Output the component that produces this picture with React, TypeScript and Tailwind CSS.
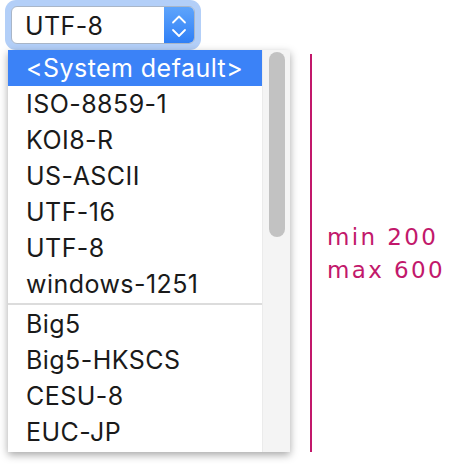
const encodings = [
  "<System default>",
  "ISO-8859-1",
  "KOI8-R",
  "US-ASCII",
  "UTF-16",
  "UTF-8",
  "windows-1251",
];

const moreEncodings = ["Big5", "Big5-HKSCS", "CESU-8", "EUC-JP"];

function Chevrons() {
  return (
    <svg width="30" height="38" viewBox="0 0 30 38" fill="none">
      <path
        d="M9 15.5 L15 9.5 L21 15.5"
        stroke="white"
        strokeWidth="1.8"
        strokeLinecap="round"
        strokeLinejoin="round"
      />
      <path
        d="M9 23 L15 29 L21 23"
        stroke="white"
        strokeWidth="1.8"
        strokeLinecap="round"
        strokeLinejoin="round"
      />
    </svg>
  );
}

export default function App() {
  return (
    <div className="w-[450px] h-[464px] bg-white flex items-start overflow-hidden font-['Inter','Liberation_Sans',sans-serif] text-[#1a1a1a]">
      <div className="w-[290px] flex flex-col">
        {/* select with focus ring */}
        <div className="ml-[5px] w-[196px] h-[50px] p-[6px] rounded-[11px] bg-[#b3cff8]">
          <div className="flex h-[38px] bg-white border border-[#a9b6c8] rounded-[6px] overflow-hidden">
            <div className="flex-1 pl-[13px] pt-[2px] flex items-center text-[25px] tracking-[0.4px] leading-none">
              UTF-8
            </div>
            <div className="w-[30px] bg-gradient-to-b from-[#5ea4fb] to-[#2f7ff6]">
              <Chevrons />
            </div>
          </div>
        </div>

        {/* popup list */}
        <div className="ml-[8px] w-[282px] h-[402px] flex bg-white shadow-[0_3px_8px_rgba(0,0,0,0.35)] overflow-hidden">
          <div className="w-[254px] flex flex-col text-[25px] tracking-[0.45px]">
            {encodings.map((name, i) => (
              <div
                key={name}
                className={
                  i === 0
                    ? "h-[36px] pl-[18px] pt-[2px] flex items-center whitespace-nowrap bg-[#3b82f7] text-white"
                    : "h-[36px] pl-[18px] pt-[2px] flex items-center whitespace-nowrap"
                }
              >
                {name}
              </div>
            ))}
            <div className="h-[4px] flex items-center">
              <div className="w-full h-[2px] bg-[#dcdcdc]" />
            </div>
            {moreEncodings.map((name) => (
              <div key={name} className="h-[36px] pl-[18px] pt-[2px] flex items-center">
                {name}
              </div>
            ))}
          </div>
          <div className="w-[28px] bg-[#f4f4f4] border-l border-[#ebebeb] pt-[2px] flex justify-center">
            <div className="w-[16px] h-[185px] rounded-full bg-[#c2c2c2]" />
          </div>
        </div>
      </div>

      <div className="ml-[20px] mt-[54px] w-[2px] h-[398px] bg-[#c2186b]" />

      <div className="ml-[15px] mt-[221px] text-[23px] leading-[33px] tracking-[2.4px] whitespace-nowrap text-[#c2186b] font-['DejaVu_Sans','Open_Sans',sans-serif]">
        <div>min 200</div>
        <div>max 600</div>
      </div>
    </div>
  );
}
